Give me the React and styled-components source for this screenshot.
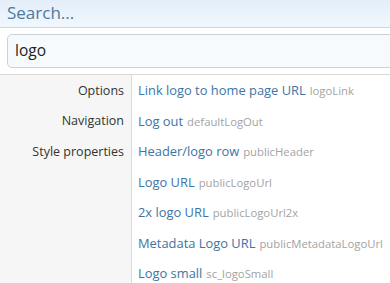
import React from "react";
import styled, { createGlobalStyle } from "styled-components";

const GlobalStyle = createGlobalStyle`
  html, body {
    margin: 0;
    padding: 0;
    background: #fff;
  }
  body {
    font-family: "Open Sans", "Noto Sans", sans-serif;
    overflow: hidden;
  }
`;

const rows = [
  { group: "Options", title: "Link logo to home page URL", key: "logoLink" },
  { group: "Navigation", title: "Log out", key: "defaultLogOut" },
  { group: "Style properties", title: "Header/logo row", key: "publicHeader" },
  { group: "", title: "Logo URL", key: "publicLogoUrl" },
  { group: "", title: "2x logo URL", key: "publicLogoUrl2x" },
  { group: "", title: "Metadata Logo URL", key: "publicMetadataLogoUrl" },
  { group: "", title: "Logo small", key: "sc_logoSmall" },
];

const App = () => {
  return (
    <>
      <GlobalStyle />
      <Page>
        <Header>
          <HeaderTitle>Search...</HeaderTitle>
        </Header>
        <SearchBar>
          <SearchInput defaultValue="logo" />
        </SearchBar>
        <Results>
          {rows.map((row, i) => (
            <ResultRow key={i}>
              <GroupCell>{row.group}</GroupCell>
              <ItemCell>
                <ItemLink href="#">{row.title}</ItemLink>
                <ItemKey>{row.key}</ItemKey>
              </ItemCell>
            </ResultRow>
          ))}
        </Results>
      </Page>
    </>
  );
};

export default App;

const Page = styled.div`
  width: 390px;
  height: 283px;
  overflow: hidden;
  background: #fff;
`;

const Header = styled.div`
  height: 27px;
  padding: 0 7px;
  display: flex;
  align-items: center;
  background: linear-gradient(to bottom, #e4eef8, #f0f7fe);
  border-bottom: 1px solid #d3d6d9;
`;

const HeaderTitle = styled.span`
  font-size: 17px;
  color: #4c7aa0;
  line-height: 1;
  margin-top: -3px;
`;

const SearchBar = styled.div`
  padding: 6px 0 6px 7px;
  border-bottom: 1px solid #d9d9d9;
`;

const SearchInput = styled.input`
  box-sizing: border-box;
  display: block;
  width: 420px;
  height: 34px;
  padding: 0 0 2px 7px;
  border: 1px solid #cfd2d4;
  border-radius: 5px;
  background: #f7fafd;
  font-family: "Open Sans", "Noto Sans", sans-serif;
  font-size: 15.5px;
  color: #222;
  outline: none;
`;

const Results = styled.div`
  display: flex;
  flex-direction: column;
  background: linear-gradient(to right, #f6f6f6 131px, #dcdcdc 131px, #dcdcdc 132px, #fff 132px);
`;

const ResultRow = styled.div`
  display: grid;
  grid-template-columns: 132px 1fr;
  height: 30.5px;
  align-items: center;
`;

const GroupCell = styled.div`
  padding-right: 8px;
  text-align: right;
  font-size: 12.5px;
  color: #333;
  white-space: nowrap;
`;

const ItemCell = styled.div`
  padding-left: 6px;
  white-space: nowrap;
  display: flex;
  align-items: baseline;
  gap: 4px;
`;

const ItemLink = styled.a`
  font-size: 12.9px;
  color: #3d74a3;
  text-decoration: none;
`;

const ItemKey = styled.span`
  font-size: 11.3px;
  color: #a3a3a3;
`;
